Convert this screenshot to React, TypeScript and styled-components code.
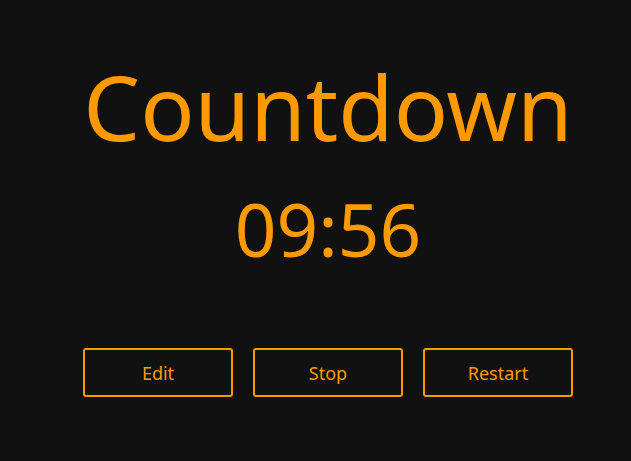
import React from "react";
import styled, { createGlobalStyle } from "styled-components";

const Global = createGlobalStyle`
  html, body { margin: 0; padding: 0; background: #111111; }
  body { font-family: "Noto Sans", "Open Sans", sans-serif; }
`;

const Page = styled.div`
  width: 631px;
  height: 461px;
  box-sizing: border-box;
  padding-left: 25px;
  display: flex;
  flex-direction: column;
  align-items: center;
  color: #ff9900;
`;

const Title = styled.h1`
  margin: 46px 0 0;
  font-size: 90px;
  font-weight: 400;
  line-height: 120px;
`;

const Timer = styled.div`
  margin-top: 13px;
  font-size: 73px;
  line-height: 100px;
`;

const Buttons = styled.div`
  display: flex;
  gap: 20px;
  margin-top: 69px;
`;

const Button = styled.button`
  width: 150px;
  height: 49px;
  box-sizing: border-box;
  background: transparent;
  border: 2px solid #ff9900;
  border-radius: 3px;
  color: #ff9900;
  font-family: "Noto Sans", sans-serif;
  font-size: 18px;
  cursor: pointer;
`;

export default function App() {
  return (
    <>
      <Global />
      <Page>
        <Title>Countdown</Title>
        <Timer>09:56</Timer>
        <Buttons>
          <Button>Edit</Button>
          <Button>Stop</Button>
          <Button>Restart</Button>
        </Buttons>
      </Page>
    </>
  );
}
